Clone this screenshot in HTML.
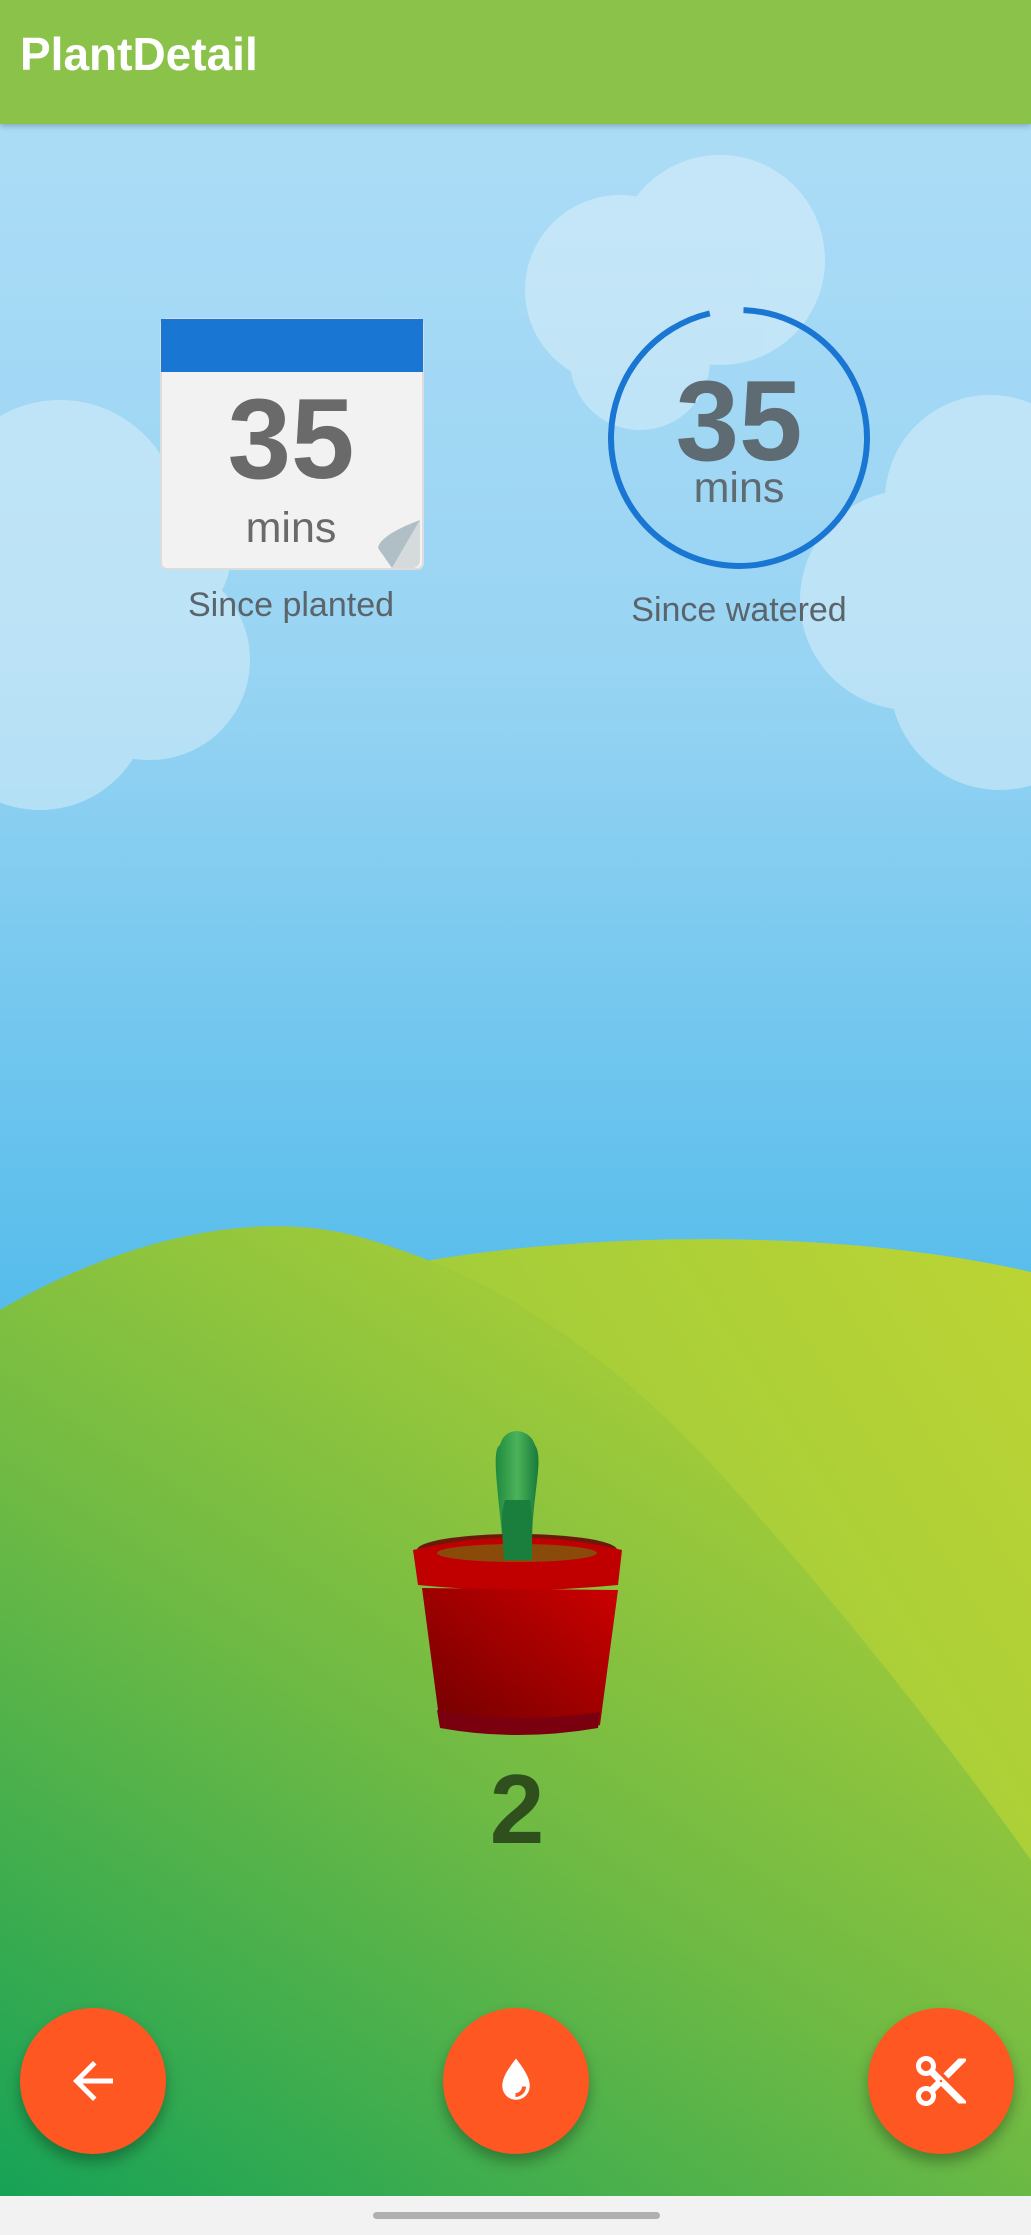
<!DOCTYPE html>
<html><head><meta charset="utf-8">
<style>
html,body{margin:0;padding:0;}
body{width:1031px;height:2235px;position:relative;overflow:hidden;font-family:"Liberation Sans",Roboto,sans-serif;}
.hdr{position:absolute;left:0;top:0;width:1031px;height:124px;background:#8bc34a;box-shadow:0 2px 6px rgba(0,0,0,.25);z-index:2;}
.hdr span{position:absolute;left:20px;top:27px;font-size:46px;font-weight:bold;color:#fff;letter-spacing:0px;}
.fab{position:absolute;width:146px;height:146px;border-radius:50%;background:#ff5722;box-shadow:0 8px 14px rgba(0,0,0,.3);top:2008px;}
.fab svg{position:absolute;left:43px;top:43px;}
.nav{position:absolute;left:0;top:2196px;width:1031px;height:39px;background:#f2f2f2;}
.nav div{position:absolute;left:373px;top:16px;width:287px;height:7px;border-radius:4px;background:#b0b0b0;}
</style></head><body>
<svg width="1031" height="2235" viewBox="0 0 1031 2235" style="position:absolute;left:0;top:0">
<defs>
<linearGradient id="sky" x1="0" y1="0" x2="0" y2="1">
<stop offset="0" stop-color="#b0def7"/><stop offset="0.3" stop-color="#98d4f3"/><stop offset="0.6" stop-color="#52bbeb"/><stop offset="1" stop-color="#3fb2e8"/>
</linearGradient>
<linearGradient id="h1" x1="0" y1="1" x2="1" y2="0">
<stop offset="0" stop-color="#8cc63f"/><stop offset="1" stop-color="#bcd434"/>
</linearGradient>
<linearGradient id="h2" x1="0" y1="1" x2="0.7" y2="0">
<stop offset="0" stop-color="#16a257"/><stop offset="0.5" stop-color="#6fba44"/><stop offset="1" stop-color="#b5d135"/>
</linearGradient>
<linearGradient id="pot" x1="0" y1="1" x2="1" y2="0">
<stop offset="0" stop-color="#6e0000"/><stop offset="1" stop-color="#cc0000"/>
</linearGradient>
<linearGradient id="cac" x1="0" y1="0" x2="1" y2="0">
<stop offset="0" stop-color="#1e8a3e"/><stop offset="0.5" stop-color="#4cb35a"/><stop offset="1" stop-color="#167a3a"/>
</linearGradient>
</defs>
<rect width="1031" height="2235" fill="url(#sky)"/>
<g fill="#e6f4fb" opacity="0.45">
<circle cx="60" cy="520" r="120"/><circle cx="150" cy="660" r="100"/><circle cx="40" cy="700" r="110"/><circle cx="170" cy="560" r="60"/>
<circle cx="620" cy="290" r="95"/><circle cx="720" cy="260" r="105"/><circle cx="640" cy="360" r="70"/>
<circle cx="990" cy="500" r="105"/><circle cx="910" cy="600" r="110"/><circle cx="1000" cy="680" r="110"/>
</g>
<path d="M420 1262 C600 1230 850 1230 1031 1272 L1031 2200 L420 2200 Z" fill="url(#h1)"/>
<path d="M0 1310 C120 1240 260 1205 370 1240 C540 1290 660 1400 770 1530 C850 1620 960 1760 1031 1860 L1031 2200 L0 2200 Z" fill="url(#h2)"/>
<rect x="161" y="319" width="262" height="250" rx="6" fill="#f2f2f2" stroke="#dcdcdc" stroke-width="2"/>
<rect x="161" y="319" width="262" height="53" fill="#1976d2"/>
<path d="M420 520 L392 568 L378 548 Q380 535 420 520Z" fill="#b0bec5"/>
<path d="M420 520 L392 568 L414 568 Q420 566 420 560Z" fill="#d5dadd"/>
<text x="291" y="478" text-anchor="middle" font-size="114" font-weight="bold" fill="#6a6a6a">35</text>
<text x="291" y="542" text-anchor="middle" font-size="43" fill="#6a6a6a">mins</text>
<text x="291" y="616" text-anchor="middle" font-size="34" fill="#5a646a">Since planted</text>
<circle cx="739" cy="438" r="128" fill="none" stroke="#c5e4f7" stroke-width="6"/>
<circle cx="739" cy="438" r="128" fill="none" stroke="#1976d2" stroke-width="6" stroke-dasharray="770 34" transform="rotate(-88 739 438)"/>
<text x="739" y="460" text-anchor="middle" font-size="114" font-weight="bold" fill="#5f6b72">35</text>
<text x="739" y="502" text-anchor="middle" font-size="43" fill="#5f6b72">mins</text>
<text x="739" y="621" text-anchor="middle" font-size="34" fill="#5a646a">Since watered</text>
<path d="M504 1560 C500 1500 490 1450 500 1445 C505 1425 530 1428 535 1445 C545 1460 530 1500 532 1560 Z" fill="url(#cac)"/>
<ellipse cx="517" cy="1550" rx="100" ry="16" fill="#6b1a0a"/>
<path d="M413 1550 Q517 1525 622 1550 L618 1585 Q517 1595 418 1585 Z" fill="#c00000"/>
<path d="M422 1588 L618 1590 L600 1725 Q517 1742 440 1725 Z" fill="url(#pot)"/>
<path d="M437 1710 Q517 1725 600 1712 L598 1728 Q517 1742 440 1728Z" fill="#7a0010"/>
<ellipse cx="517" cy="1553" rx="80" ry="9" fill="#8a4a0a"/>
<path d="M504 1560 C502 1530 500 1515 505 1500 L530 1500 C533 1515 532 1535 532 1560 Z" fill="#1a7e3c"/>
<text x="517" y="1843" text-anchor="middle" font-size="98" font-weight="bold" fill="#2f4f1d">2</text>
</svg>
<div class="hdr"><span>PlantDetail</span></div>
<div class="fab" style="left:20px"><svg width="60" height="60" viewBox="0 0 24 24"><path d="M20 11H7.8l5.6-5.6L12 4l-8 8 8 8 1.4-1.4L7.8 13H20v-2z" fill="#fff"/></svg></div>
<div class="fab" style="left:443px"><svg width="60" height="60" viewBox="0 0 24 24"><path d="M12 3 C9 7 6.5 10.5 6.5 14 a5.5 5.5 0 0 0 11 0 C17.5 10.5 15 7 12 3Z" fill="#fff"/><path d="M15.2 14.2 a3.4 3.4 0 0 1 -3.4 3.4" stroke="#ff5722" stroke-width="1.6" fill="none"/></svg></div>
<div class="fab" style="left:868px"><svg width="60" height="60" viewBox="0 0 24 24"><path d="M9.64 7.64c.23-.5.36-1.05.36-1.64 0-2.21-1.790-4-4-4S2 3.79 2 6s1.79 4 4 4c.59 0 1.14-.13 1.64-.36L10 12l-2.36 2.36C7.14 14.13 6.59 14 6 14c-2.21 0-4 1.79-4 4s1.79 4 4 4 4-1.79 4-4c0-.59-.13-1.14-.36-1.64L12 14l7 7h3v-1L9.64 7.64zM6 8c-1.1 0-2-.89-2-2s.9-2 2-2 2 .89 2 2-.9 2-2 2zm0 12c-1.1 0-2-.89-2-2s.9-2 2-2 2 .89 2 2-.9 2-2 2zm6-7.5c-.28 0-.5-.22-.5-.5s.22-.5.5-.5.5.22.5.5-.22.5-.5.5zM19 3l-6 6 2 2 7-7V3z" fill="#fff"/></svg></div>
<div class="nav"><div></div></div>
</body></html>
